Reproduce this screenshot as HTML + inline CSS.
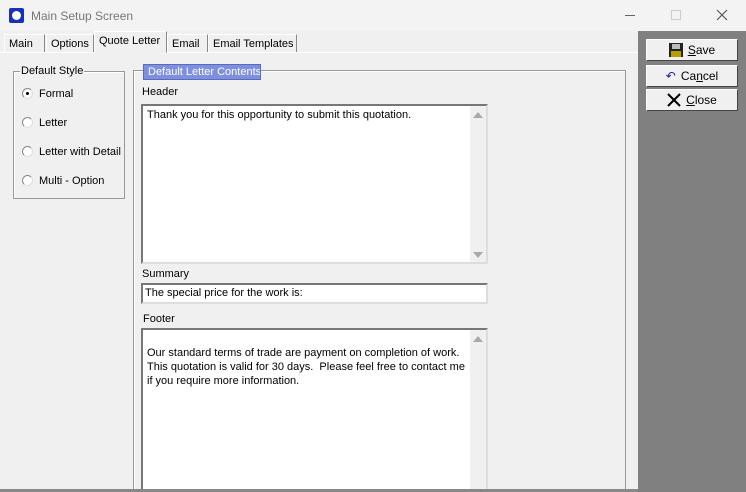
<!DOCTYPE html>
<html><head><style>
*{margin:0;padding:0;box-sizing:border-box}
html,body{width:746px;height:492px;overflow:hidden}
body{background:#f0f0f0;font-family:"Liberation Sans",Arial,sans-serif;font-size:11px;color:#000;position:relative;white-space:nowrap}
.a{position:absolute}
.tab{position:absolute;top:34px;height:18px;border:1px solid #fff;border-right:1px solid #888;border-bottom:none;padding:3px 4px 0 4px;background:#f0f0f0;white-space:nowrap}
.rad{position:absolute;left:22px;width:11px;height:11px;border-radius:50%;background:#fff;border:1px solid #888;border-right-color:#ddd;border-bottom-color:#ddd}
.ta{position:absolute;background:#fff;border:2px solid #777;border-right-color:#ddd;border-bottom-color:#ddd;overflow:hidden}
.btn{position:absolute;left:646px;width:92px;height:22px;background:#f0f0f0;border:1px solid #fff;border-right-color:#444;border-bottom-color:#444;font-size:12px;color:#000;display:flex;align-items:center;justify-content:center;gap:5px}
.up{width:0;height:0;border-left:5px solid transparent;border-right:5px solid transparent;border-bottom:6px solid #aaa}
.dn{width:0;height:0;border-left:5px solid transparent;border-right:5px solid transparent;border-top:6px solid #aaa}
</style></head><body>
<div class="a" style="left:0;top:0;width:746px;height:31px;background:#f3f3f3"></div>
<div class="a" style="left:9px;top:8px;width:15px;height:15px;background:#1b2fbf;border-radius:2px"><div style="margin:3px;width:9px;height:9px;border-radius:50%;background:#fff"></div></div>
<div class="a" style="left:31px;top:9px;font-size:12px;color:#777">Main Setup Screen</div>
<div class="a" style="left:625px;top:15px;width:10px;height:1px;background:#666"></div>
<div class="a" style="left:671px;top:10px;width:10px;height:10px;border:1px solid #ccc"></div>
<svg class="a" style="left:716px;top:9px" width="12" height="12"><path d="M1 1L11 11M11 1L1 11" stroke="#555" stroke-width="1.2"/></svg>
<div class="a" style="left:638px;top:31px;width:108px;height:461px;background:#808080"></div>
<div class="a" style="left:0;top:52px;width:638px;height:1px;background:#fff"></div>
<div class="tab" style="left:4px;width:41px">Main</div>
<div class="tab" style="left:46px;width:48px">Options</div>
<div class="tab" style="left:94px;width:73px;top:31px;height:22px;border-bottom:1px solid #f0f0f0;z-index:2">Quote Letter</div>
<div class="tab" style="left:167px;width:41px">Email</div>
<div class="tab" style="left:208px;width:89px">Email Templates</div>
<div class="a" style="left:13px;top:71px;width:112px;height:128px;border:1px solid #999;box-shadow:1px 1px 0 #fff inset"></div>
<div class="a" style="left:20px;top:65px;background:#f0f0f0;padding:0 1px">Default Style</div>
<div class="rad" style="top:88px"><div style="margin:3px;width:3px;height:3px;background:#000;border-radius:50%"></div></div>
<div class="a" style="left:39px;top:88px">Formal</div>
<div class="rad" style="top:117px"></div><div class="a" style="left:39px;top:117px">Letter</div>
<div class="rad" style="top:146px"></div><div class="a" style="left:39px;top:146px">Letter with Detail</div>
<div class="rad" style="top:175px"></div><div class="a" style="left:39px;top:175px">Multi - Option</div>
<div class="a" style="left:133px;top:70px;width:493px;height:430px;border:1px solid #999;box-shadow:1px 1px 0 #fff inset"></div>
<div class="a" style="left:143px;top:64px;width:118px;height:16px;background:#7f8fdf;border:1px solid #5a6ac0;color:#fff;font-size:11px;padding:1px 0 0 4px;white-space:nowrap;overflow:hidden">Default Letter Contents</div>
<div class="a" style="left:142px;top:86px">Header</div>
<div class="ta" style="left:141px;top:104px;width:347px;height:160px"><div style="padding:3px 4px">Thank you for this opportunity to submit this quotation.</div>
<div class="a" style="right:0;top:0;width:16px;height:156px;background:#f0f0f0"><div class="up" style="margin:6px 3px"></div><div class="dn" style="position:absolute;bottom:4px;left:3px"></div></div></div>
<div class="a" style="left:142px;top:268px">Summary</div>
<div class="ta" style="left:141px;top:283px;width:347px;height:21px;padding:2px 2px">The special price for the work is:</div>
<div class="a" style="left:143px;top:313px">Footer</div>
<div class="ta" style="left:141px;top:328px;width:347px;height:170px"><div style="padding:16px 4px;line-height:14px">Our standard terms of trade are payment on completion of work.<br>This quotation is valid for 30 days.&nbsp; Please feel free to contact me<br>if you require more information.</div>
<div class="a" style="right:0;top:0;width:16px;height:170px;background:#f0f0f0"><div class="up" style="margin:6px 3px"></div></div></div>
<div class="a" style="left:0;top:489px;width:638px;height:3px;background:#888"></div>
<div class="btn" style="top:39px"><svg width="14" height="14"><rect x="0" y="0" width="14" height="14" fill="#222"/><rect x="3" y="1" width="8" height="5" fill="#bbb"/><rect x="2" y="8" width="10" height="6" fill="#b5a000"/></svg><span><u>S</u>ave</span></div>
<div class="btn" style="top:65px"><span style="color:#1a1aa0;font-size:12px">↶</span><span>Ca<u>n</u>cel</span></div>
<div class="btn" style="top:89px"><svg width="14" height="14"><path d="M1 1L13 13M13 1L1 13" stroke="#000" stroke-width="2"/></svg><span><u>C</u>lose</span></div>
</body></html>
